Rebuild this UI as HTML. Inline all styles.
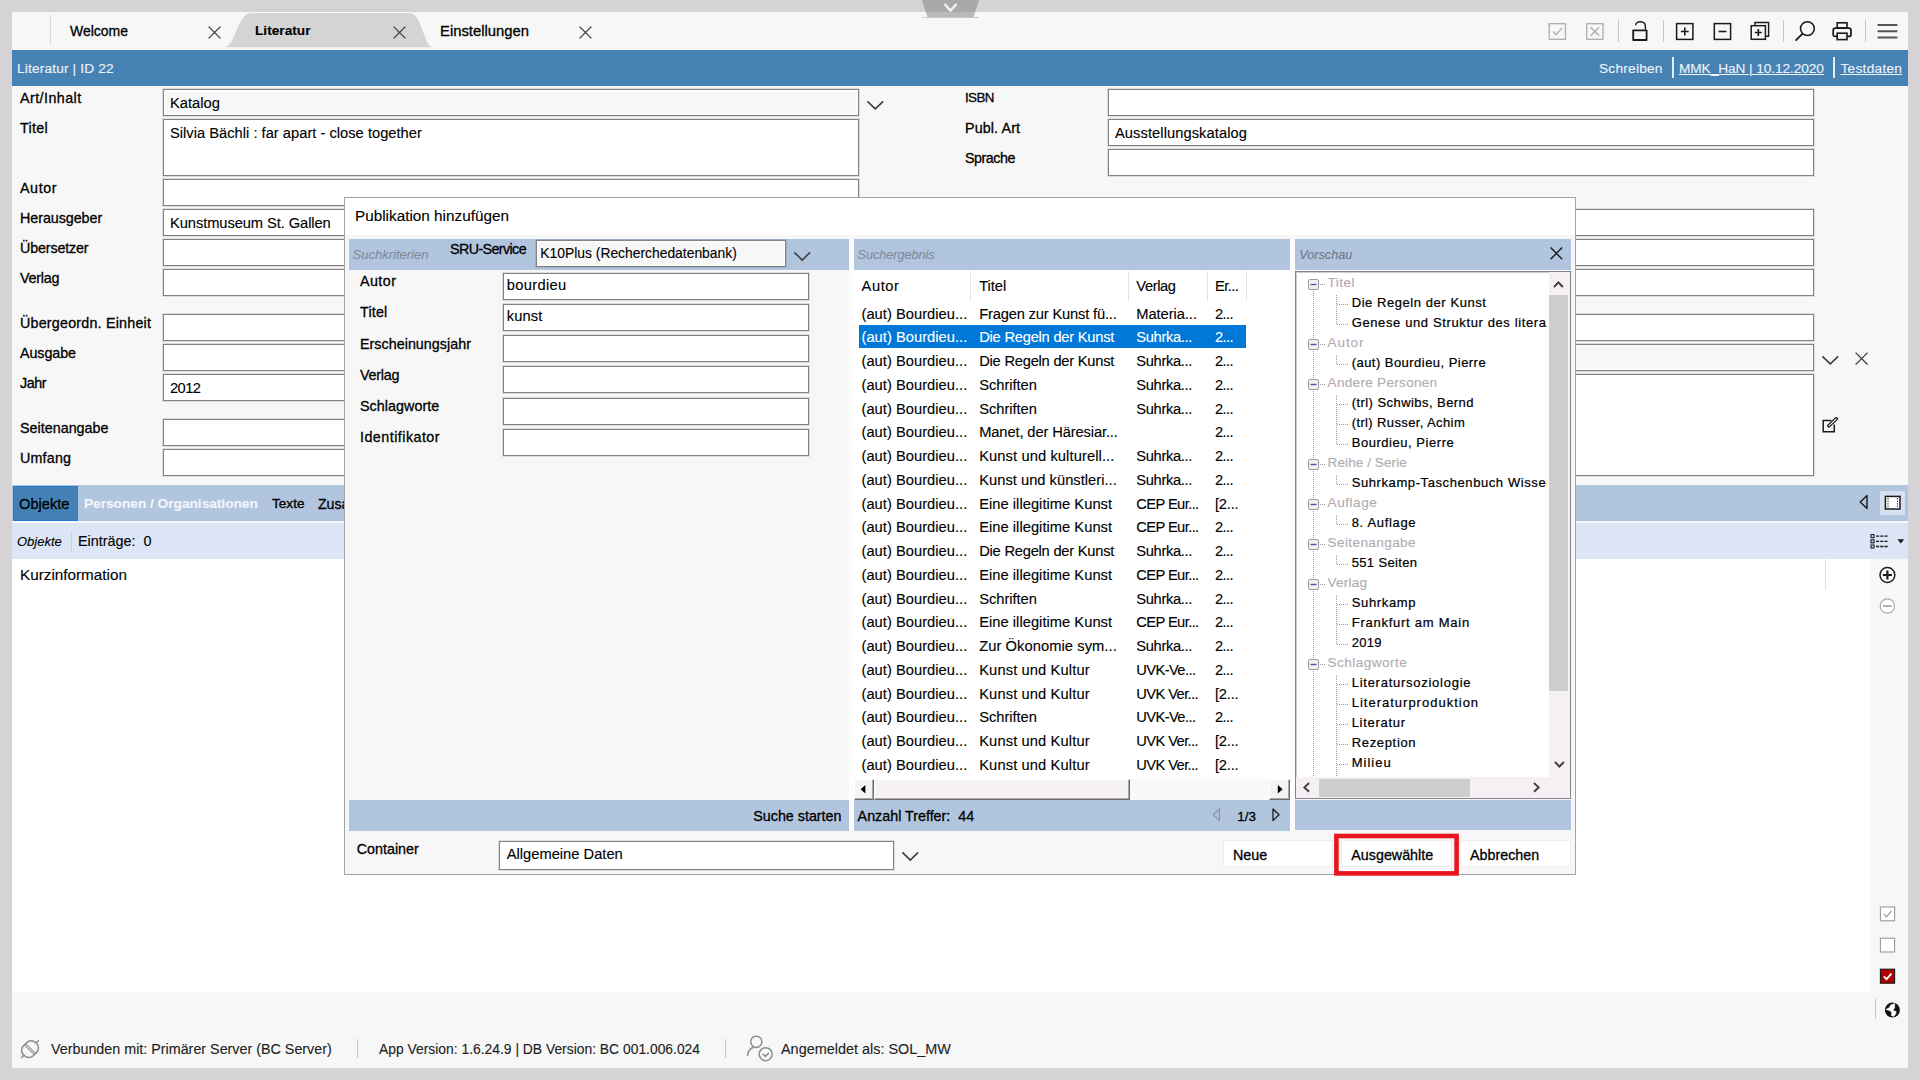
<!DOCTYPE html>
<html lang="de"><head><meta charset="utf-8"><title>Literatur | ID 22</title>
<style>
html,body{margin:0;padding:0}
body{width:1920px;height:1080px;overflow:hidden;background:#d6d3d6;position:relative;font-family:"Liberation Sans",sans-serif;color:#000}
.a{position:absolute;box-sizing:border-box}
.t{position:absolute;white-space:pre;line-height:20px;height:20px;-webkit-text-stroke:0.12px}
.f{position:absolute;box-sizing:border-box;border:1px solid #848184;background:#fff;box-shadow:inset 0 0 0 1px #fff,0 0 0 1px rgba(0,0,0,0.10)}
.g{background:#f7f7f7}
.clip{position:absolute;overflow:hidden}
</style></head><body>
<div class="a" style="left:12px;top:12px;width:1896px;height:1056px;background:#f7f7f7;"></div>
<svg class="a" style="left:915px;top:0px;" width="72" height="20" viewBox="0 0 72 20"><polygon points="7,0 64,0 60.2,12 10.8,12" fill="#a9a9a9"/><polygon points="10.8,12 60.2,12 58.4,17.5 12.6,17.5" fill="#b9b9b9"/><rect x="7" y="17" width="57" height="1" fill="#c8c8c8"/><polyline points="29.5,4 35.5,10.5 41.5,4" fill="none" stroke="#f4f4f4" stroke-width="2.4"/></svg>
<div class="a" style="left:50px;top:15px;width:1px;height:30px;background:#d9d9d9;"></div>
<svg class="a" style="left:220px;top:12px;" width="220" height="38" viewBox="0 0 220 38"><path d="M3.5,35.3 C16,35.3 17,1 31,1 L189,1 C203,1 203,35.3 213.5,35.3 Z" fill="#d4d4d4"/></svg>
<div class="t" style="top:21.16px;font-size:13.98px;left:70px;-webkit-text-stroke:0.3px;">Welcome</div>
<div class="t" style="top:21.26px;font-size:13.68px;left:255px;font-weight:bold;">Literatur</div>
<div class="t" style="top:20.86px;font-size:14.82px;left:440px;-webkit-text-stroke:0.3px;">Einstellungen</div>
<svg class="a" style="left:208.3px;top:26.2px;" width="13" height="13" viewBox="0 0 13 13"><path d="M0.6,0.6 L12.4,12.4 M12.4,0.6 L0.6,12.4" stroke="#3a3a3a" stroke-width="1.3" fill="none"/></svg>
<svg class="a" style="left:393.3px;top:26.2px;" width="13" height="13" viewBox="0 0 13 13"><path d="M0.6,0.6 L12.4,12.4 M12.4,0.6 L0.6,12.4" stroke="#3a3a3a" stroke-width="1.3" fill="none"/></svg>
<svg class="a" style="left:578.8px;top:26.2px;" width="13" height="13" viewBox="0 0 13 13"><path d="M0.6,0.6 L12.4,12.4 M12.4,0.6 L0.6,12.4" stroke="#3a3a3a" stroke-width="1.3" fill="none"/></svg>
<svg class="a" style="left:1548px;top:22px;" width="20" height="19" viewBox="0 0 20 19"><rect x="1.2" y="1.7" width="16.3" height="15.6" fill="none" stroke="#adadad" stroke-width="1.3"/><polyline points="5,9.5 8,12.8 14,5.8" fill="none" stroke="#adadad" stroke-width="1.3"/></svg>
<svg class="a" style="left:1585px;top:22px;" width="20" height="19" viewBox="0 0 20 19"><rect x="1.7" y="1.7" width="16.3" height="15.6" fill="none" stroke="#adadad" stroke-width="1.3"/><path d="M5.6,5.2 L14.2,13.8 M14.2,5.2 L5.6,13.8" fill="none" stroke="#adadad" stroke-width="1.3"/></svg>
<div class="a" style="left:1618px;top:20px;width:1px;height:22px;background:#c6c6c6;"></div>
<svg class="a" style="left:1629px;top:19px;" width="22" height="24" viewBox="0 0 22 24"><rect x="4.2" y="11.3" width="13.4" height="9.7" fill="none" stroke="#1a1a1a" stroke-width="1.8" stroke-linejoin="round"/><path d="M6.6,6.4 C6.8,1.6 16.4,1.2 16.4,7.4 V10.6" fill="none" stroke="#1a1a1a" stroke-width="1.4"/></svg>
<div class="a" style="left:1663px;top:20px;width:1px;height:22px;background:#c6c6c6;"></div>
<svg class="a" style="left:1674px;top:21px;" width="22" height="21" viewBox="0 0 22 21"><rect x="2.6" y="2.6" width="16.3" height="15.8" fill="none" stroke="#1a1a1a" stroke-width="1.5"/><path d="M10.8,6.6 V14.4 M6.9,10.5 H14.7" stroke="#1a1a1a" stroke-width="1.6" fill="none"/></svg>
<svg class="a" style="left:1712px;top:21px;" width="22" height="21" viewBox="0 0 22 21"><rect x="2.3" y="2.6" width="16.3" height="15.8" fill="none" stroke="#1a1a1a" stroke-width="1.5"/><path d="M6.6,10.5 H14.4" stroke="#1a1a1a" stroke-width="1.6" fill="none"/></svg>
<svg class="a" style="left:1748px;top:19px;" width="24" height="24" viewBox="0 0 24 24"><path d="M7,6.2 V3.5 H20.6 V17.2 H18" fill="none" stroke="#1a1a1a" stroke-width="1.4"/><rect x="3.2" y="6.7" width="14.2" height="13.6" fill="none" stroke="#1a1a1a" stroke-width="1.5"/><path d="M10.3,10 V17 M6.8,13.5 H13.8" stroke="#1a1a1a" stroke-width="1.7" fill="none"/></svg>
<div class="a" style="left:1783px;top:20px;width:1px;height:22px;background:#c6c6c6;"></div>
<svg class="a" style="left:1793px;top:19px;" width="24" height="24" viewBox="0 0 24 24"><circle cx="14.4" cy="9.6" r="6.9" fill="none" stroke="#1a1a1a" stroke-width="1.6"/><path d="M9.6,14.6 L2.6,21.6" stroke="#1a1a1a" stroke-width="1.9" fill="none"/></svg>
<svg class="a" style="left:1830px;top:19px;" width="24" height="24" viewBox="0 0 24 24"><rect x="7.2" y="3.8" width="9.8" height="5.2" fill="none" stroke="#1a1a1a" stroke-width="1.6"/><path d="M7,17.4 H5.3 C3.8,17.4 3.2,16.6 3.2,15.4 V11.4 C3.2,10 4,9.2 5.4,9.2 H18.8 C20.2,9.2 21,10 21,11.4 V15.4 C21,16.6 20.4,17.4 18.9,17.4 H17.2" fill="none" stroke="#1a1a1a" stroke-width="1.7"/><rect x="7.2" y="14.2" width="9.8" height="6.4" fill="none" stroke="#1a1a1a" stroke-width="1.6"/></svg>
<div class="a" style="left:1865px;top:20px;width:1px;height:22px;background:#c6c6c6;"></div>
<svg class="a" style="left:1876px;top:20px;" width="24" height="22" viewBox="0 0 24 22"><path d="M1.6,5 H21.4 M1.6,11.2 H21.4 M1.6,17.4 H21.4" stroke="#555" stroke-width="2" fill="none"/></svg>
<div class="a" style="left:12px;top:50px;width:1896px;height:36.3px;background:#4682b4;"></div>
<div class="t" style="top:59.25px;font-size:13.7px;left:17px;color:#eef3f9;letter-spacing:0.16px;">Literatur | ID 22</div>
<div class="t" style="top:59.25px;font-size:13.7px;left:1599px;color:#eef3f9;letter-spacing:0.23px;">Schreiben</div>
<div class="a" style="left:1671.6px;top:57px;width:2px;height:20.5px;background:#e4ecf5;"></div>
<div class="t" style="top:59.25px;font-size:13.7px;left:1679px;color:#eef3f9;text-decoration:underline;text-underline-offset:1px;text-decoration-thickness:1px;letter-spacing:-0.09px;">MMK_HaN | 10.12.2020</div>
<div class="a" style="left:1833px;top:57px;width:2px;height:20.5px;background:#e4ecf5;"></div>
<div class="t" style="top:59.25px;font-size:13.7px;left:1840.5px;color:#eef3f9;text-decoration:underline;text-underline-offset:1px;text-decoration-thickness:1px;letter-spacing:0.26px;">Testdaten</div>
<div class="t" style="top:87.55px;font-size:14.3px;left:20px;letter-spacing:0.44px;-webkit-text-stroke:0.3px;">Art/Inhalt</div>
<div class="f g" style="left:162.5px;top:89px;width:696.5px;height:27px"></div>
<div class="t" style="top:92.71px;font-size:14.7px;left:170px;letter-spacing:0.02px;">Katalog</div>
<div class="t" style="top:117.55px;font-size:14.3px;left:20px;letter-spacing:0.28px;-webkit-text-stroke:0.3px;">Titel</div>
<div class="f" style="left:162.5px;top:119px;width:696.5px;height:57px"></div>
<div class="t" style="top:122.71px;font-size:14.7px;left:170px;letter-spacing:0.01px;">Silvia Bächli : far apart - close together</div>
<div class="t" style="top:177.55px;font-size:14.3px;left:20px;letter-spacing:0.58px;-webkit-text-stroke:0.3px;">Autor</div>
<div class="f" style="left:162.5px;top:179px;width:696.5px;height:27px"></div>
<div class="t" style="top:207.55px;font-size:14.3px;left:20px;letter-spacing:-0.05px;-webkit-text-stroke:0.3px;">Herausgeber</div>
<div class="f" style="left:162.5px;top:209px;width:696.5px;height:27px"></div>
<div class="t" style="top:212.71px;font-size:14.7px;left:170px;letter-spacing:-0.08px;">Kunstmuseum St. Gallen</div>
<div class="t" style="top:237.55px;font-size:14.3px;left:20px;letter-spacing:-0.15px;-webkit-text-stroke:0.3px;">Übersetzer</div>
<div class="f" style="left:162.5px;top:239px;width:696.5px;height:27px"></div>
<div class="t" style="top:267.55px;font-size:14.3px;left:20px;letter-spacing:-0.21px;-webkit-text-stroke:0.3px;">Verlag</div>
<div class="f" style="left:162.5px;top:269px;width:696.5px;height:27px"></div>
<div class="t" style="top:312.55px;font-size:14.3px;left:20px;letter-spacing:0.21px;-webkit-text-stroke:0.3px;">Übergeordn. Einheit</div>
<div class="f" style="left:162.5px;top:314px;width:696.5px;height:27px"></div>
<div class="t" style="top:342.55px;font-size:14.3px;left:20px;letter-spacing:-0.08px;-webkit-text-stroke:0.3px;">Ausgabe</div>
<div class="f" style="left:162.5px;top:344px;width:696.5px;height:27px"></div>
<div class="t" style="top:372.55px;font-size:14.3px;left:20px;letter-spacing:-0.44px;-webkit-text-stroke:0.3px;">Jahr</div>
<div class="f" style="left:162.5px;top:374px;width:696.5px;height:27px"></div>
<div class="t" style="top:377.71px;font-size:14.7px;left:170px;letter-spacing:-0.60px;">2012</div>
<div class="t" style="top:417.55px;font-size:14.3px;left:20px;letter-spacing:0.02px;-webkit-text-stroke:0.3px;">Seitenangabe</div>
<div class="f" style="left:162.5px;top:419px;width:696.5px;height:27px"></div>
<div class="t" style="top:447.55px;font-size:14.3px;left:20px;letter-spacing:0.19px;-webkit-text-stroke:0.3px;">Umfang</div>
<div class="f" style="left:162.5px;top:449px;width:696.5px;height:27px"></div>
<svg class="a" style="left:865.7px;top:99.6px;" width="18.6" height="10.6" viewBox="0 0 18.6 10.6"><polyline points="1.4,1.4 9.3,8.9 17.200000000000003,1.4" fill="none" stroke="#3c3c3c" stroke-width="1.5"/></svg>
<div class="t" style="top:87.86px;font-size:13.4px;left:965px;letter-spacing:-0.60px;-webkit-text-stroke:0.3px;">ISBN</div>
<div class="f" style="left:1107.5px;top:89px;width:706.5px;height:27px"></div>
<div class="t" style="top:117.55px;font-size:14.3px;left:965px;letter-spacing:0.12px;-webkit-text-stroke:0.3px;">Publ. Art</div>
<div class="f" style="left:1107.5px;top:119px;width:706.5px;height:27px"></div>
<div class="t" style="top:122.71px;font-size:14.7px;left:1115px;letter-spacing:0.07px;">Ausstellungskatalog</div>
<div class="t" style="top:147.55px;font-size:14.3px;left:965px;letter-spacing:-0.46px;-webkit-text-stroke:0.3px;">Sprache</div>
<div class="f" style="left:1107.5px;top:149px;width:706.5px;height:27px"></div>
<div class="f" style="left:1107.5px;top:209px;width:706.5px;height:27px"></div>
<div class="f" style="left:1107.5px;top:239px;width:706.5px;height:27px"></div>
<div class="f" style="left:1107.5px;top:269px;width:706.5px;height:27px"></div>
<div class="f" style="left:1107.5px;top:314px;width:706.5px;height:27px"></div>
<div class="f g" style="left:1107.5px;top:344px;width:706.5px;height:27px"></div>
<div class="f" style="left:1107.5px;top:374px;width:706.5px;height:102px"></div>
<svg class="a" style="left:1820.7px;top:354.6px;" width="18.6" height="10.6" viewBox="0 0 18.6 10.6"><polyline points="1.4,1.4 9.3,8.9 17.200000000000003,1.4" fill="none" stroke="#3c3c3c" stroke-width="1.5"/></svg>
<svg class="a" style="left:1854.8px;top:351.9px;" width="13.2" height="13.2" viewBox="0 0 13.2 13.2"><path d="M0.6,0.6 L12.6,12.6 M12.6,0.6 L0.6,12.6" stroke="#3a3a3a" stroke-width="1.3" fill="none"/></svg>
<svg class="a" style="left:1820px;top:415px;" width="20" height="20" viewBox="0 0 20 20"><path d="M11.4,5.5 H3.2 V16.7 H14.3 V9.6" fill="none" stroke="#1a1a1a" stroke-width="1.5"/><path d="M8.9,10.8 L16.3,3.8" stroke="#1a1a1a" stroke-width="3.6" stroke-linecap="round" fill="none"/><path d="M9.1,10.6 L16.1,4" stroke="#f7f7f7" stroke-width="1.1" stroke-linecap="round" fill="none"/></svg>
<div class="a" style="left:12px;top:485px;width:1896px;height:36px;background:#b2c5df;"></div>
<div class="a" style="left:12.5px;top:485.5px;width:65px;height:35px;background:#4380b6;border:1px solid #1f7fd4;"></div>
<div class="t" style="top:493.72px;font-size:14.65px;left:19px;-webkit-text-stroke:0.3px;">Objekte</div>
<div class="t" style="top:494.06px;font-size:13.67px;left:84px;color:#f2f6fb;font-weight:bold;">Personen / Organisationen</div>
<div class="t" style="top:494.09px;font-size:13.6px;left:272px;-webkit-text-stroke:0.3px;">Texte</div>
<div class="t" style="top:493.91px;font-size:14.1px;left:318px;-webkit-text-stroke:0.3px;">Zusatz</div>
<svg class="a" style="left:1858px;top:494px;" width="12" height="17" viewBox="0 0 12 17"><path d="M9,1.6 V14.6 L2.2,8.1 Z" fill="none" stroke="#1a1a1a" stroke-width="1.4" stroke-linejoin="round"/></svg>
<div class="a" style="left:1880px;top:490.5px;width:25px;height:24.5px;background:#d6e0f0;"></div>
<svg class="a" style="left:1884px;top:495px;" width="18" height="16" viewBox="0 0 18 16"><rect x="1.4" y="1.4" width="14.6" height="12.6" fill="#fff" stroke="#1a1a1a" stroke-width="1.5"/><path d="M4,3 V12.5 M13.4,3 V12.5" stroke="#1a1a1a" stroke-width="1" stroke-dasharray="1.3,1.3" fill="none"/></svg>
<div class="a" style="left:12px;top:522.5px;width:1896px;height:36px;background:#dde6f6;"></div>
<div class="t" style="top:531.50px;font-size:13px;left:17px;font-style:italic;">Objekte</div>
<div class="a" style="left:70.5px;top:531px;width:1px;height:20px;background:#c3cfe2;"></div>
<div class="t" style="top:531.02px;font-size:14.37px;left:78px;">Einträge:  0</div>
<svg class="a" style="left:1869px;top:533px;" width="22" height="17" viewBox="0 0 22 17"><g fill="none" stroke="#1a1a1a" stroke-width="1.1"><rect x="2" y="1.6" width="3" height="3"/><rect x="2" y="6.8" width="3" height="3"/><rect x="2" y="12" width="3" height="3"/></g><path d="M7,3.1 H19 M7,8.3 H19 M7,13.5 H19" stroke="#1a1a1a" stroke-width="1.3" stroke-dasharray="3.2,1" fill="none"/></svg>
<svg class="a" style="left:1896px;top:538px;" width="10" height="7" viewBox="0 0 10 7"><path d="M1.4,1.2 H8.2 L4.8,5.4 Z" fill="#1a1a1a"/></svg>
<div class="a" style="left:12px;top:558.5px;width:1858px;height:433.5px;background:#fff;"></div>
<div class="a" style="left:1825px;top:559px;width:1px;height:31px;background:#e0e0e0;"></div>
<div class="t" style="top:564.71px;font-size:15.28px;left:20px;">Kurzinformation</div>
<svg class="a" style="left:1877px;top:565px;" width="21" height="21" viewBox="0 0 21 21"><circle cx="10.4" cy="10" r="7.4" fill="#fff" stroke="#1a1a1a" stroke-width="1.5"/><path d="M10.4,5.4 V14.6 M5.8,10 H15" stroke="#1a1a1a" stroke-width="2.2" fill="none"/></svg>
<svg class="a" style="left:1877px;top:596px;" width="21" height="21" viewBox="0 0 21 21"><circle cx="10.4" cy="10" r="7.2" fill="#fff" stroke="#aaaaaa" stroke-width="1.2"/><path d="M6,10 H14.8" stroke="#aaaaaa" stroke-width="1.8" fill="none"/></svg>
<svg class="a" style="left:1878px;top:905px;" width="19" height="18" viewBox="0 0 19 18"><rect x="2.4" y="2" width="14.2" height="13.8" fill="#fff" stroke="#9a9a9a" stroke-width="1.1"/><polyline points="6,9 8.6,11.8 13.4,6" fill="none" stroke="#9a9a9a" stroke-width="1.2"/></svg>
<svg class="a" style="left:1878px;top:936px;" width="19" height="18" viewBox="0 0 19 18"><rect x="2.4" y="2.2" width="14.2" height="13.8" fill="#fff" stroke="#9a9a9a" stroke-width="1.1"/></svg>
<svg class="a" style="left:1878px;top:967px;" width="19" height="18" viewBox="0 0 19 18"><rect x="2.4" y="2.2" width="14.2" height="14" fill="#b00000" stroke="#1a1a1a" stroke-width="1.1"/><polyline points="5.8,9.4 8.6,12.2 13.4,6.6" fill="none" stroke="#fff" stroke-width="1.8"/></svg>
<div class="a" style="left:1875px;top:998.5px;width:1px;height:20px;background:#c8c8c8;"></div>
<svg class="a" style="left:1883px;top:1000px;" width="20" height="20" viewBox="0 0 20 20"><circle cx="9.4" cy="10" r="7.5" fill="#111"/><path d="M11.7,3.4 L7.4,5.2 L6.8,7.2 L3.2,9.5 L7.2,10.8 L9,12.9 L8.2,15.3 L10.6,16.4 L12.6,14.2 L13.2,11.6 L10.9,11 L10.3,9.5 L11.6,7.9 Z" fill="#fff" stroke="#fff" stroke-width="0.6" stroke-linejoin="round"/></svg>
<div class="a" style="left:12px;top:1027.5px;width:1896px;height:1px;background:#fbfbfb;"></div>
<svg class="a" style="left:17px;top:1036px;" width="26" height="26" viewBox="0 0 26 26"><g transform="translate(13,13.1) rotate(45)" fill="none" stroke="#8c8c8c" stroke-width="1.5"><rect x="-7" y="-8.6" width="14" height="17.2" rx="6.2"/><path d="M-7,-0.9 H7 M-7,0.9 H7" stroke-width="1"/><path d="M0,-8.6 V-12.6 M0,8.6 V12.6"/></g></svg>
<div class="t" style="top:1038.54px;font-size:14.32px;left:51px;color:#1e1e1e;">Verbunden mit: Primärer Server (BC Server)</div>
<div class="a" style="left:357px;top:1039px;width:1px;height:19px;background:#c6c6c6;"></div>
<div class="t" style="top:1038.70px;font-size:13.86px;left:379px;color:#1e1e1e;">App Version: 1.6.24.9 | DB Version: BC 001.006.024</div>
<div class="a" style="left:724.5px;top:1039px;width:1px;height:19px;background:#c6c6c6;"></div>
<svg class="a" style="left:746px;top:1034px;" width="30" height="30" viewBox="0 0 30 30"><g fill="none" stroke="#8c8c8c" stroke-width="1.5"><circle cx="10.3" cy="7.8" r="5.6"/><path d="M1.4,21.8 C1.9,17 4.4,14.3 7.5,13.2"/><circle cx="19.7" cy="20.2" r="6.5"/><polyline points="16.8,20 19.4,22.4 23,18.9"/></g></svg>
<div class="t" style="top:1038.50px;font-size:14.43px;left:781px;color:#1e1e1e;">Angemeldet als: SOL_MW</div>
<div class="a" style="left:344px;top:197px;width:1232px;height:678px;background:#f7f7f7;border:1px solid #a3a3a3;"></div>
<div class="a" style="left:345px;top:198px;width:1230px;height:37px;background:#fff;"></div>
<div class="t" style="top:206.00px;font-size:15.3px;left:355px;">Publikation hinzufügen</div>
<div class="a" style="left:348.7px;top:239px;width:500px;height:31.3px;background:#b1c5df;"></div>
<div class="t" style="top:244.69px;font-size:13.02px;left:352.5px;color:#7f8a9a;font-style:italic;">Suchkriterien</div>
<div class="t" style="top:239.05px;font-size:14.3px;left:450px;letter-spacing:-0.60px;-webkit-text-stroke:0.3px;">SRU-Service</div>
<div class="f g" style="left:536px;top:240px;width:250px;height:27.3px"></div>
<div class="t" style="top:243.20px;font-size:13.86px;left:540.3px;">K10Plus (Recherchedatenbank)</div>
<svg class="a" style="left:793.3px;top:251px;" width="18.4" height="10.8" viewBox="0 0 18.4 10.8"><polyline points="1.4,1.4 9.2,9.100000000000001 17.0,1.4" fill="none" stroke="#3c3c3c" stroke-width="1.5"/></svg>
<div class="t" style="top:271.15px;font-size:14.3px;left:360px;letter-spacing:0.43px;-webkit-text-stroke:0.3px;">Autor</div>
<div class="f" style="left:502.5px;top:272.5px;width:306.5px;height:27px"></div>
<div class="t" style="top:275.01px;font-size:14.7px;left:506.8px;letter-spacing:0.33px;">bourdieu</div>
<div class="t" style="top:302.40px;font-size:14.3px;left:360px;letter-spacing:0.18px;-webkit-text-stroke:0.3px;">Titel</div>
<div class="f" style="left:502.5px;top:304.0px;width:306.5px;height:27px"></div>
<div class="t" style="top:306.26px;font-size:14.7px;left:506.8px;letter-spacing:0.12px;">kunst</div>
<div class="t" style="top:333.65px;font-size:14.3px;left:360px;letter-spacing:0.03px;-webkit-text-stroke:0.3px;">Erscheinungsjahr</div>
<div class="f" style="left:502.5px;top:335.0px;width:306.5px;height:27px"></div>
<div class="t" style="top:364.90px;font-size:14.3px;left:360px;letter-spacing:-0.23px;-webkit-text-stroke:0.3px;">Verlag</div>
<div class="f" style="left:502.5px;top:366.0px;width:306.5px;height:27px"></div>
<div class="t" style="top:396.15px;font-size:14.3px;left:360px;letter-spacing:0.06px;-webkit-text-stroke:0.3px;">Schlagworte</div>
<div class="f" style="left:502.5px;top:397.5px;width:306.5px;height:27px"></div>
<div class="t" style="top:427.40px;font-size:14.3px;left:360px;letter-spacing:0.47px;-webkit-text-stroke:0.3px;">Identifikator</div>
<div class="f" style="left:502.5px;top:429.0px;width:306.5px;height:27px"></div>
<div class="a" style="left:348.7px;top:800.3px;width:500px;height:30.3px;background:#b1c5df;"></div>
<div class="t" style="top:806.25px;font-size:14.3px;right:1078.5px;-webkit-text-stroke:0.3px;">Suche starten</div>
<div class="t" style="top:838.85px;font-size:14.3px;left:356.8px;-webkit-text-stroke:0.3px;">Container</div>
<div class="f" style="left:498.5px;top:840.5px;width:395px;height:29px"></div>
<div class="t" style="top:843.61px;font-size:14.7px;left:506.8px;">Allgemeine Daten</div>
<svg class="a" style="left:900.6px;top:851.4px;" width="18.6" height="10.8" viewBox="0 0 18.6 10.8"><polyline points="1.4,1.4 9.3,9.100000000000001 17.200000000000003,1.4" fill="none" stroke="#3c3c3c" stroke-width="1.5"/></svg>
<div class="a" style="left:1222.7px;top:840.3px;width:110.6px;height:26.6px;background:#fff;border:1px solid #ededed;"></div>
<div class="t" style="top:844.75px;font-size:14.3px;left:1233px;-webkit-text-stroke:0.3px;">Neue</div>
<div class="a" style="left:1341px;top:840.3px;width:111px;height:26.6px;background:#fff;border:1px solid #ededed;"></div>
<div class="t" style="top:844.75px;font-size:14.3px;left:1351.3px;-webkit-text-stroke:0.3px;">Ausgewählte</div>
<div class="a" style="left:1460.3px;top:840.3px;width:110.6px;height:26.6px;background:#fff;border:1px solid #ededed;"></div>
<div class="t" style="top:844.75px;font-size:14.3px;left:1470px;-webkit-text-stroke:0.3px;">Abbrechen</div>
<div class="a" style="left:848.7px;top:239px;width:5px;height:591.6px;background:#fdfdfd;"></div>
<div class="a" style="left:1290.2px;top:239px;width:5.1px;height:591.6px;background:#fdfdfd;"></div>
<div class="a" style="left:853.7px;top:239px;width:436.5px;height:31.3px;background:#b1c5df;"></div>
<div class="t" style="top:244.83px;font-size:12.6px;left:857.6px;color:#7f8a9a;font-style:italic;">Suchergebnis</div>
<div class="a" style="left:853.7px;top:270.3px;width:436.5px;height:509px;background:#fff;"></div>
<div class="a" style="left:970px;top:271px;width:1px;height:29.5px;background:#e5e5e5;"></div>
<div class="a" style="left:1128px;top:271px;width:1px;height:29.5px;background:#e5e5e5;"></div>
<div class="a" style="left:1206.5px;top:271px;width:1px;height:29.5px;background:#e5e5e5;"></div>
<div class="a" style="left:1245.5px;top:271px;width:1px;height:29.5px;background:#e5e5e5;"></div>
<div class="t" style="top:276.21px;font-size:14.7px;left:861.5px;letter-spacing:0.59px;">Autor</div>
<div class="t" style="top:276.21px;font-size:14.7px;left:979.2px;letter-spacing:-0.06px;">Titel</div>
<div class="t" style="top:276.21px;font-size:14.7px;left:1136.3px;letter-spacing:-0.40px;">Verlag</div>
<div class="t" style="top:276.21px;font-size:14.7px;left:1215px;letter-spacing:-0.60px;">Er...</div>
<div class="t" style="top:303.71px;font-size:14.7px;left:861.5px;letter-spacing:0.03px;">(aut) Bourdieu...</div>
<div class="t" style="top:303.71px;font-size:14.7px;left:979.2px;letter-spacing:-0.17px;">Fragen zur Kunst fü...</div>
<div class="t" style="top:303.71px;font-size:14.7px;left:1136.3px;letter-spacing:-0.06px;">Materia...</div>
<div class="t" style="top:303.71px;font-size:14.7px;left:1215px;letter-spacing:-0.60px;">2...</div>
<div class="a" style="left:858.7px;top:325.3px;width:387.7px;height:23.2px;background:#0078d7;"></div>
<div class="t" style="top:327.46px;font-size:14.7px;left:861.5px;color:#fff;letter-spacing:0.03px;">(aut) Bourdieu...</div>
<div class="t" style="top:327.46px;font-size:14.7px;left:979.2px;color:#fff;letter-spacing:-0.23px;">Die Regeln der Kunst</div>
<div class="t" style="top:327.46px;font-size:14.7px;left:1136.3px;color:#fff;letter-spacing:-0.35px;">Suhrka...</div>
<div class="t" style="top:327.46px;font-size:14.7px;left:1215px;color:#fff;letter-spacing:-0.60px;">2...</div>
<div class="t" style="top:351.21px;font-size:14.7px;left:861.5px;letter-spacing:0.03px;">(aut) Bourdieu...</div>
<div class="t" style="top:351.21px;font-size:14.7px;left:979.2px;letter-spacing:-0.23px;">Die Regeln der Kunst</div>
<div class="t" style="top:351.21px;font-size:14.7px;left:1136.3px;letter-spacing:-0.35px;">Suhrka...</div>
<div class="t" style="top:351.21px;font-size:14.7px;left:1215px;letter-spacing:-0.60px;">2...</div>
<div class="t" style="top:374.96px;font-size:14.7px;left:861.5px;letter-spacing:0.03px;">(aut) Bourdieu...</div>
<div class="t" style="top:374.96px;font-size:14.7px;left:979.2px;letter-spacing:-0.03px;">Schriften</div>
<div class="t" style="top:374.96px;font-size:14.7px;left:1136.3px;letter-spacing:-0.35px;">Suhrka...</div>
<div class="t" style="top:374.96px;font-size:14.7px;left:1215px;letter-spacing:-0.60px;">2...</div>
<div class="t" style="top:398.71px;font-size:14.7px;left:861.5px;letter-spacing:0.03px;">(aut) Bourdieu...</div>
<div class="t" style="top:398.71px;font-size:14.7px;left:979.2px;letter-spacing:-0.03px;">Schriften</div>
<div class="t" style="top:398.71px;font-size:14.7px;left:1136.3px;letter-spacing:-0.35px;">Suhrka...</div>
<div class="t" style="top:398.71px;font-size:14.7px;left:1215px;letter-spacing:-0.60px;">2...</div>
<div class="t" style="top:422.46px;font-size:14.7px;left:861.5px;letter-spacing:0.03px;">(aut) Bourdieu...</div>
<div class="t" style="top:422.46px;font-size:14.7px;left:979.2px;letter-spacing:-0.12px;">Manet, der Häresiar...</div>
<div class="t" style="top:422.46px;font-size:14.7px;left:1215px;letter-spacing:-0.60px;">2...</div>
<div class="t" style="top:446.21px;font-size:14.7px;left:861.5px;letter-spacing:0.03px;">(aut) Bourdieu...</div>
<div class="t" style="top:446.21px;font-size:14.7px;left:979.2px;letter-spacing:0.10px;">Kunst und kulturell...</div>
<div class="t" style="top:446.21px;font-size:14.7px;left:1136.3px;letter-spacing:-0.35px;">Suhrka...</div>
<div class="t" style="top:446.21px;font-size:14.7px;left:1215px;letter-spacing:-0.60px;">2...</div>
<div class="t" style="top:469.96px;font-size:14.7px;left:861.5px;letter-spacing:0.03px;">(aut) Bourdieu...</div>
<div class="t" style="top:469.96px;font-size:14.7px;left:979.2px;letter-spacing:0.02px;">Kunst und künstleri...</div>
<div class="t" style="top:469.96px;font-size:14.7px;left:1136.3px;letter-spacing:-0.35px;">Suhrka...</div>
<div class="t" style="top:469.96px;font-size:14.7px;left:1215px;letter-spacing:-0.60px;">2...</div>
<div class="t" style="top:493.71px;font-size:14.7px;left:861.5px;letter-spacing:0.03px;">(aut) Bourdieu...</div>
<div class="t" style="top:493.71px;font-size:14.7px;left:979.2px;letter-spacing:0.03px;">Eine illegitime Kunst</div>
<div class="t" style="top:493.71px;font-size:14.7px;left:1136.3px;letter-spacing:-0.60px;">CEP Eur...</div>
<div class="t" style="top:493.71px;font-size:14.7px;left:1215px;letter-spacing:-0.23px;">[2...</div>
<div class="t" style="top:517.46px;font-size:14.7px;left:861.5px;letter-spacing:0.03px;">(aut) Bourdieu...</div>
<div class="t" style="top:517.46px;font-size:14.7px;left:979.2px;letter-spacing:0.03px;">Eine illegitime Kunst</div>
<div class="t" style="top:517.46px;font-size:14.7px;left:1136.3px;letter-spacing:-0.60px;">CEP Eur...</div>
<div class="t" style="top:517.46px;font-size:14.7px;left:1215px;letter-spacing:-0.60px;">2...</div>
<div class="t" style="top:541.21px;font-size:14.7px;left:861.5px;letter-spacing:0.03px;">(aut) Bourdieu...</div>
<div class="t" style="top:541.21px;font-size:14.7px;left:979.2px;letter-spacing:-0.23px;">Die Regeln der Kunst</div>
<div class="t" style="top:541.21px;font-size:14.7px;left:1136.3px;letter-spacing:-0.35px;">Suhrka...</div>
<div class="t" style="top:541.21px;font-size:14.7px;left:1215px;letter-spacing:-0.60px;">2...</div>
<div class="t" style="top:564.96px;font-size:14.7px;left:861.5px;letter-spacing:0.03px;">(aut) Bourdieu...</div>
<div class="t" style="top:564.96px;font-size:14.7px;left:979.2px;letter-spacing:0.03px;">Eine illegitime Kunst</div>
<div class="t" style="top:564.96px;font-size:14.7px;left:1136.3px;letter-spacing:-0.60px;">CEP Eur...</div>
<div class="t" style="top:564.96px;font-size:14.7px;left:1215px;letter-spacing:-0.60px;">2...</div>
<div class="t" style="top:588.71px;font-size:14.7px;left:861.5px;letter-spacing:0.03px;">(aut) Bourdieu...</div>
<div class="t" style="top:588.71px;font-size:14.7px;left:979.2px;letter-spacing:-0.03px;">Schriften</div>
<div class="t" style="top:588.71px;font-size:14.7px;left:1136.3px;letter-spacing:-0.35px;">Suhrka...</div>
<div class="t" style="top:588.71px;font-size:14.7px;left:1215px;letter-spacing:-0.60px;">2...</div>
<div class="t" style="top:612.46px;font-size:14.7px;left:861.5px;letter-spacing:0.03px;">(aut) Bourdieu...</div>
<div class="t" style="top:612.46px;font-size:14.7px;left:979.2px;letter-spacing:0.03px;">Eine illegitime Kunst</div>
<div class="t" style="top:612.46px;font-size:14.7px;left:1136.3px;letter-spacing:-0.60px;">CEP Eur...</div>
<div class="t" style="top:612.46px;font-size:14.7px;left:1215px;letter-spacing:-0.60px;">2...</div>
<div class="t" style="top:636.21px;font-size:14.7px;left:861.5px;letter-spacing:0.03px;">(aut) Bourdieu...</div>
<div class="t" style="top:636.21px;font-size:14.7px;left:979.2px;letter-spacing:0.07px;">Zur Ökonomie sym...</div>
<div class="t" style="top:636.21px;font-size:14.7px;left:1136.3px;letter-spacing:-0.35px;">Suhrka...</div>
<div class="t" style="top:636.21px;font-size:14.7px;left:1215px;letter-spacing:-0.60px;">2...</div>
<div class="t" style="top:659.96px;font-size:14.7px;left:861.5px;letter-spacing:0.03px;">(aut) Bourdieu...</div>
<div class="t" style="top:659.96px;font-size:14.7px;left:979.2px;letter-spacing:0.12px;">Kunst und Kultur</div>
<div class="t" style="top:659.96px;font-size:14.7px;left:1136.3px;letter-spacing:-0.60px;">UVK-Ve...</div>
<div class="t" style="top:659.96px;font-size:14.7px;left:1215px;letter-spacing:-0.60px;">2...</div>
<div class="t" style="top:683.71px;font-size:14.7px;left:861.5px;letter-spacing:0.03px;">(aut) Bourdieu...</div>
<div class="t" style="top:683.71px;font-size:14.7px;left:979.2px;letter-spacing:0.12px;">Kunst und Kultur</div>
<div class="t" style="top:683.71px;font-size:14.7px;left:1136.3px;letter-spacing:-0.60px;">UVK Ver...</div>
<div class="t" style="top:683.71px;font-size:14.7px;left:1215px;letter-spacing:-0.23px;">[2...</div>
<div class="t" style="top:707.46px;font-size:14.7px;left:861.5px;letter-spacing:0.03px;">(aut) Bourdieu...</div>
<div class="t" style="top:707.46px;font-size:14.7px;left:979.2px;letter-spacing:-0.03px;">Schriften</div>
<div class="t" style="top:707.46px;font-size:14.7px;left:1136.3px;letter-spacing:-0.60px;">UVK-Ve...</div>
<div class="t" style="top:707.46px;font-size:14.7px;left:1215px;letter-spacing:-0.60px;">2...</div>
<div class="t" style="top:731.21px;font-size:14.7px;left:861.5px;letter-spacing:0.03px;">(aut) Bourdieu...</div>
<div class="t" style="top:731.21px;font-size:14.7px;left:979.2px;letter-spacing:0.12px;">Kunst und Kultur</div>
<div class="t" style="top:731.21px;font-size:14.7px;left:1136.3px;letter-spacing:-0.60px;">UVK Ver...</div>
<div class="t" style="top:731.21px;font-size:14.7px;left:1215px;letter-spacing:-0.23px;">[2...</div>
<div class="t" style="top:754.96px;font-size:14.7px;left:861.5px;letter-spacing:0.03px;">(aut) Bourdieu...</div>
<div class="t" style="top:754.96px;font-size:14.7px;left:979.2px;letter-spacing:0.12px;">Kunst und Kultur</div>
<div class="t" style="top:754.96px;font-size:14.7px;left:1136.3px;letter-spacing:-0.60px;">UVK Ver...</div>
<div class="t" style="top:754.96px;font-size:14.7px;left:1215px;letter-spacing:-0.23px;">[2...</div>
<div class="a" style="left:853.7px;top:779px;width:436.5px;height:21px;background:#faf9fa;"></div>
<div class="a" style="left:853.7px;top:779px;width:20.6px;height:21px;background:#f6f2f6;border:1px solid #fff;border-right-color:#6d6d6d;border-bottom-color:#6d6d6d;box-shadow:inset -1px -1px 0 #a8a8a8;"></div>
<div class="a" style="left:874.3px;top:779px;width:255.4px;height:21px;background:#f6f2f6;border:1px solid #fff;border-right-color:#6d6d6d;border-bottom-color:#6d6d6d;box-shadow:inset -1px -1px 0 #a8a8a8;"></div>
<div class="a" style="left:1269.2px;top:779px;width:21px;height:21px;background:#f6f2f6;border:1px solid #fff;border-right-color:#6d6d6d;border-bottom-color:#6d6d6d;box-shadow:inset -1px -1px 0 #a8a8a8;"></div>
<svg class="a" style="left:859px;top:784.2px;" width="8" height="11" viewBox="0 0 8 11"><path d="M6.4,1 V9.6 L1.6,5.3 Z" fill="#000"/></svg>
<svg class="a" style="left:1276px;top:784.2px;" width="8" height="11" viewBox="0 0 8 11"><path d="M1.8,1 V9.6 L6.6,5.3 Z" fill="#000"/></svg>
<div class="a" style="left:853.7px;top:800.3px;width:436.5px;height:30.3px;background:#b1c5df;"></div>
<div class="t" style="top:806.25px;font-size:14.3px;left:857.6px;-webkit-text-stroke:0.3px;">Anzahl Treffer:  44</div>
<div class="t" style="top:806.56px;font-size:13.4px;left:1237.3px;-webkit-text-stroke:0.3px;">1/3</div>
<svg class="a" style="left:1211px;top:807px;" width="11" height="16" viewBox="0 0 11 16"><path d="M8.4,2 V13.6 L2.4,7.8 Z" fill="none" stroke="#8a96a8" stroke-width="1.2" stroke-linejoin="round"/></svg>
<svg class="a" style="left:1270.3px;top:807.4px;" width="11" height="16" viewBox="0 0 11 16"><path d="M3,2 V13.6 L9,7.8 Z" fill="none" stroke="#1a1a1a" stroke-width="1.3" stroke-linejoin="round"/></svg>
<div class="a" style="left:1295.3px;top:239px;width:275.7px;height:31.3px;background:#b1c5df;"></div>
<div class="t" style="top:244.91px;font-size:12.66px;left:1299.3px;color:#6f7886;font-style:italic;">Vorschau</div>
<svg class="a" style="left:1550.2px;top:247.3px;" width="12.8" height="12.8" viewBox="0 0 12.8 12.8"><path d="M0.6,0.6 L12.200000000000001,12.200000000000001 M12.200000000000001,0.6 L0.6,12.200000000000001" stroke="#1a1a1a" stroke-width="1.4" fill="none"/></svg>
<div class="a" style="left:1295px;top:271px;width:276.3px;height:527.7px;background:#fff;border:1px solid #85858f;box-shadow:inset 0 0 0 1px rgba(133,133,143,0.4);"></div>
<div class="a" style="left:1295.3px;top:800.3px;width:275.7px;height:29.3px;background:#b1c5df;"></div>
<div class="a" style="left:1548.5px;top:272px;width:21.5px;height:505px;background:#f4f0f4;"></div>
<div class="a" style="left:1549px;top:294.5px;width:19px;height:396px;background:#cdcdcd;"></div>
<svg class="a" style="left:1552.2px;top:280px;" width="13" height="9" viewBox="0 0 13 9"><polyline points="2,7 6.4,2.4 10.8,7" fill="none" stroke="#404040" stroke-width="2"/></svg>
<svg class="a" style="left:1553px;top:760px;" width="13" height="9" viewBox="0 0 13 9"><polyline points="2,2 6.4,6.6 10.8,2" fill="none" stroke="#404040" stroke-width="2"/></svg>
<div class="a" style="left:1296.3px;top:777px;width:273.7px;height:20.5px;background:#f4f0f4;"></div>
<div class="a" style="left:1319px;top:778.5px;width:150.5px;height:18px;background:#cdcdcd;"></div>
<svg class="a" style="left:1302px;top:781px;" width="9" height="13" viewBox="0 0 9 13"><polyline points="7,2 2.4,6.4 7,10.8" fill="none" stroke="#404040" stroke-width="2"/></svg>
<svg class="a" style="left:1532px;top:781px;" width="9" height="13" viewBox="0 0 9 13"><polyline points="2,2 6.6,6.4 2,10.8" fill="none" stroke="#404040" stroke-width="2"/></svg>
<div class="clip" style="left:1296px;top:272px;width:250.7px;height:505px">
<svg class="a" style="left:0;top:0" width="252" height="505" shape-rendering="crispEdges"><path d="M17.5,12.5 V505" stroke="#9a9a9a" stroke-width="1" stroke-dasharray="1,1" fill="none"/><path d="M23.5,12.5 H28.5" stroke="#9a9a9a" stroke-width="1" stroke-dasharray="1,1" fill="none"/><rect x="12.5" y="7.5" width="10" height="10" rx="1.5" fill="#f1eff1" stroke="#9c9c9c" stroke-width="1" shape-rendering="auto"/><path d="M14.5,12.5 H20.5" stroke="#4358a8" stroke-width="1.3" shape-rendering="auto"/><path d="M40.5,22.5 V42.5" stroke="#9a9a9a" stroke-width="1" stroke-dasharray="1,1" fill="none"/><path d="M40.5,32.5 H51.5" stroke="#9a9a9a" stroke-width="1" stroke-dasharray="1,1" fill="none"/><path d="M40.5,42.5 V52.5" stroke="#9a9a9a" stroke-width="1" stroke-dasharray="1,1" fill="none"/><path d="M40.5,52.5 H51.5" stroke="#9a9a9a" stroke-width="1" stroke-dasharray="1,1" fill="none"/><path d="M23.5,72.5 H28.5" stroke="#9a9a9a" stroke-width="1" stroke-dasharray="1,1" fill="none"/><rect x="12.5" y="67.5" width="10" height="10" rx="1.5" fill="#f1eff1" stroke="#9c9c9c" stroke-width="1" shape-rendering="auto"/><path d="M14.5,72.5 H20.5" stroke="#4358a8" stroke-width="1.3" shape-rendering="auto"/><path d="M40.5,82.5 V92.5" stroke="#9a9a9a" stroke-width="1" stroke-dasharray="1,1" fill="none"/><path d="M40.5,92.5 H51.5" stroke="#9a9a9a" stroke-width="1" stroke-dasharray="1,1" fill="none"/><path d="M23.5,112.5 H28.5" stroke="#9a9a9a" stroke-width="1" stroke-dasharray="1,1" fill="none"/><rect x="12.5" y="107.5" width="10" height="10" rx="1.5" fill="#f1eff1" stroke="#9c9c9c" stroke-width="1" shape-rendering="auto"/><path d="M14.5,112.5 H20.5" stroke="#4358a8" stroke-width="1.3" shape-rendering="auto"/><path d="M40.5,122.5 V142.5" stroke="#9a9a9a" stroke-width="1" stroke-dasharray="1,1" fill="none"/><path d="M40.5,132.5 H51.5" stroke="#9a9a9a" stroke-width="1" stroke-dasharray="1,1" fill="none"/><path d="M40.5,142.5 V162.5" stroke="#9a9a9a" stroke-width="1" stroke-dasharray="1,1" fill="none"/><path d="M40.5,152.5 H51.5" stroke="#9a9a9a" stroke-width="1" stroke-dasharray="1,1" fill="none"/><path d="M40.5,162.5 V172.5" stroke="#9a9a9a" stroke-width="1" stroke-dasharray="1,1" fill="none"/><path d="M40.5,172.5 H51.5" stroke="#9a9a9a" stroke-width="1" stroke-dasharray="1,1" fill="none"/><path d="M23.5,192.5 H28.5" stroke="#9a9a9a" stroke-width="1" stroke-dasharray="1,1" fill="none"/><rect x="12.5" y="187.5" width="10" height="10" rx="1.5" fill="#f1eff1" stroke="#9c9c9c" stroke-width="1" shape-rendering="auto"/><path d="M14.5,192.5 H20.5" stroke="#4358a8" stroke-width="1.3" shape-rendering="auto"/><path d="M40.5,202.5 V212.5" stroke="#9a9a9a" stroke-width="1" stroke-dasharray="1,1" fill="none"/><path d="M40.5,212.5 H51.5" stroke="#9a9a9a" stroke-width="1" stroke-dasharray="1,1" fill="none"/><path d="M23.5,232.5 H28.5" stroke="#9a9a9a" stroke-width="1" stroke-dasharray="1,1" fill="none"/><rect x="12.5" y="227.5" width="10" height="10" rx="1.5" fill="#f1eff1" stroke="#9c9c9c" stroke-width="1" shape-rendering="auto"/><path d="M14.5,232.5 H20.5" stroke="#4358a8" stroke-width="1.3" shape-rendering="auto"/><path d="M40.5,242.5 V252.5" stroke="#9a9a9a" stroke-width="1" stroke-dasharray="1,1" fill="none"/><path d="M40.5,252.5 H51.5" stroke="#9a9a9a" stroke-width="1" stroke-dasharray="1,1" fill="none"/><path d="M23.5,272.5 H28.5" stroke="#9a9a9a" stroke-width="1" stroke-dasharray="1,1" fill="none"/><rect x="12.5" y="267.5" width="10" height="10" rx="1.5" fill="#f1eff1" stroke="#9c9c9c" stroke-width="1" shape-rendering="auto"/><path d="M14.5,272.5 H20.5" stroke="#4358a8" stroke-width="1.3" shape-rendering="auto"/><path d="M40.5,282.5 V292.5" stroke="#9a9a9a" stroke-width="1" stroke-dasharray="1,1" fill="none"/><path d="M40.5,292.5 H51.5" stroke="#9a9a9a" stroke-width="1" stroke-dasharray="1,1" fill="none"/><path d="M23.5,312.5 H28.5" stroke="#9a9a9a" stroke-width="1" stroke-dasharray="1,1" fill="none"/><rect x="12.5" y="307.5" width="10" height="10" rx="1.5" fill="#f1eff1" stroke="#9c9c9c" stroke-width="1" shape-rendering="auto"/><path d="M14.5,312.5 H20.5" stroke="#4358a8" stroke-width="1.3" shape-rendering="auto"/><path d="M40.5,322.5 V342.5" stroke="#9a9a9a" stroke-width="1" stroke-dasharray="1,1" fill="none"/><path d="M40.5,332.5 H51.5" stroke="#9a9a9a" stroke-width="1" stroke-dasharray="1,1" fill="none"/><path d="M40.5,342.5 V362.5" stroke="#9a9a9a" stroke-width="1" stroke-dasharray="1,1" fill="none"/><path d="M40.5,352.5 H51.5" stroke="#9a9a9a" stroke-width="1" stroke-dasharray="1,1" fill="none"/><path d="M40.5,362.5 V372.5" stroke="#9a9a9a" stroke-width="1" stroke-dasharray="1,1" fill="none"/><path d="M40.5,372.5 H51.5" stroke="#9a9a9a" stroke-width="1" stroke-dasharray="1,1" fill="none"/><path d="M23.5,392.5 H28.5" stroke="#9a9a9a" stroke-width="1" stroke-dasharray="1,1" fill="none"/><rect x="12.5" y="387.5" width="10" height="10" rx="1.5" fill="#f1eff1" stroke="#9c9c9c" stroke-width="1" shape-rendering="auto"/><path d="M14.5,392.5 H20.5" stroke="#4358a8" stroke-width="1.3" shape-rendering="auto"/><path d="M40.5,402.5 V422.5" stroke="#9a9a9a" stroke-width="1" stroke-dasharray="1,1" fill="none"/><path d="M40.5,412.5 H51.5" stroke="#9a9a9a" stroke-width="1" stroke-dasharray="1,1" fill="none"/><path d="M40.5,422.5 V442.5" stroke="#9a9a9a" stroke-width="1" stroke-dasharray="1,1" fill="none"/><path d="M40.5,432.5 H51.5" stroke="#9a9a9a" stroke-width="1" stroke-dasharray="1,1" fill="none"/><path d="M40.5,442.5 V462.5" stroke="#9a9a9a" stroke-width="1" stroke-dasharray="1,1" fill="none"/><path d="M40.5,452.5 H51.5" stroke="#9a9a9a" stroke-width="1" stroke-dasharray="1,1" fill="none"/><path d="M40.5,462.5 V482.5" stroke="#9a9a9a" stroke-width="1" stroke-dasharray="1,1" fill="none"/><path d="M40.5,472.5 H51.5" stroke="#9a9a9a" stroke-width="1" stroke-dasharray="1,1" fill="none"/><path d="M40.5,482.5 V502.5" stroke="#9a9a9a" stroke-width="1" stroke-dasharray="1,1" fill="none"/><path d="M40.5,492.5 H51.5" stroke="#9a9a9a" stroke-width="1" stroke-dasharray="1,1" fill="none"/><path d="M40.5,502.5 V512.5" stroke="#9a9a9a" stroke-width="1" stroke-dasharray="1,1" fill="none"/><path d="M40.5,512.5 H51.5" stroke="#9a9a9a" stroke-width="1" stroke-dasharray="1,1" fill="none"/></svg>
<div class="t" style="top:0.69px;font-size:13.6px;left:31.59999999999991px;color:#b0acb0;letter-spacing:0.45px;">Titel</div>
<div class="t" style="top:20.90px;font-size:13.0px;left:55.700000000000045px;-webkit-text-stroke:0.22px #000;letter-spacing:0.56px;">Die Regeln der Kunst</div>
<div class="t" style="top:40.90px;font-size:13.0px;left:55.700000000000045px;letter-spacing:0.62px;-webkit-text-stroke:0.22px #000;">Genese und Struktur des literarischen Feldes</div>
<div class="t" style="top:60.69px;font-size:13.6px;left:31.59999999999991px;color:#b0acb0;letter-spacing:0.87px;">Autor</div>
<div class="t" style="top:80.90px;font-size:13.0px;left:55.700000000000045px;-webkit-text-stroke:0.22px #000;letter-spacing:0.46px;">(aut) Bourdieu, Pierre</div>
<div class="t" style="top:100.69px;font-size:13.6px;left:31.59999999999991px;color:#b0acb0;letter-spacing:0.27px;">Andere Personen</div>
<div class="t" style="top:120.90px;font-size:13.0px;left:55.700000000000045px;-webkit-text-stroke:0.22px #000;letter-spacing:0.44px;">(trl) Schwibs, Bernd</div>
<div class="t" style="top:140.90px;font-size:13.0px;left:55.700000000000045px;-webkit-text-stroke:0.22px #000;letter-spacing:0.38px;">(trl) Russer, Achim</div>
<div class="t" style="top:160.90px;font-size:13.0px;left:55.700000000000045px;-webkit-text-stroke:0.22px #000;letter-spacing:0.54px;">Bourdieu, Pierre</div>
<div class="t" style="top:180.69px;font-size:13.6px;left:31.59999999999991px;color:#b0acb0;letter-spacing:0.05px;">Reihe / Serie</div>
<div class="t" style="top:200.90px;font-size:13.0px;left:55.700000000000045px;letter-spacing:0.59px;-webkit-text-stroke:0.22px #000;">Suhrkamp-Taschenbuch Wissenschaft</div>
<div class="t" style="top:220.69px;font-size:13.6px;left:31.59999999999991px;color:#b0acb0;letter-spacing:0.51px;">Auflage</div>
<div class="t" style="top:240.90px;font-size:13.0px;left:55.700000000000045px;-webkit-text-stroke:0.22px #000;letter-spacing:0.67px;">8. Auflage</div>
<div class="t" style="top:260.69px;font-size:13.6px;left:31.59999999999991px;color:#b0acb0;letter-spacing:0.37px;">Seitenangabe</div>
<div class="t" style="top:280.90px;font-size:13.0px;left:55.700000000000045px;-webkit-text-stroke:0.22px #000;letter-spacing:0.35px;">551 Seiten</div>
<div class="t" style="top:300.69px;font-size:13.6px;left:31.59999999999991px;color:#b0acb0;letter-spacing:0.17px;">Verlag</div>
<div class="t" style="top:320.90px;font-size:13.0px;left:55.700000000000045px;-webkit-text-stroke:0.22px #000;letter-spacing:0.66px;">Suhrkamp</div>
<div class="t" style="top:340.90px;font-size:13.0px;left:55.700000000000045px;-webkit-text-stroke:0.22px #000;letter-spacing:0.75px;">Frankfurt am Main</div>
<div class="t" style="top:360.90px;font-size:13.0px;left:55.700000000000045px;-webkit-text-stroke:0.22px #000;letter-spacing:0.26px;">2019</div>
<div class="t" style="top:380.69px;font-size:13.6px;left:31.59999999999991px;color:#b0acb0;letter-spacing:0.44px;">Schlagworte</div>
<div class="t" style="top:400.90px;font-size:13.0px;left:55.700000000000045px;-webkit-text-stroke:0.22px #000;letter-spacing:0.74px;">Literatursoziologie</div>
<div class="t" style="top:420.90px;font-size:13.0px;left:55.700000000000045px;-webkit-text-stroke:0.22px #000;letter-spacing:1.00px;">Literaturproduktion</div>
<div class="t" style="top:440.90px;font-size:13.0px;left:55.700000000000045px;-webkit-text-stroke:0.22px #000;letter-spacing:0.70px;">Literatur</div>
<div class="t" style="top:460.90px;font-size:13.0px;left:55.700000000000045px;-webkit-text-stroke:0.22px #000;letter-spacing:0.67px;">Rezeption</div>
<div class="t" style="top:480.90px;font-size:13.0px;left:55.700000000000045px;-webkit-text-stroke:0.22px #000;letter-spacing:1.00px;">Milieu</div>
</div>
<svg class="a" style="left:1330px;top:830px;" width="134" height="50" viewBox="0 0 134 50"><rect x="6.4" y="6" width="120.2" height="37.4" fill="none" stroke="#e8141f" stroke-width="4.6"/></svg>
</body></html>
